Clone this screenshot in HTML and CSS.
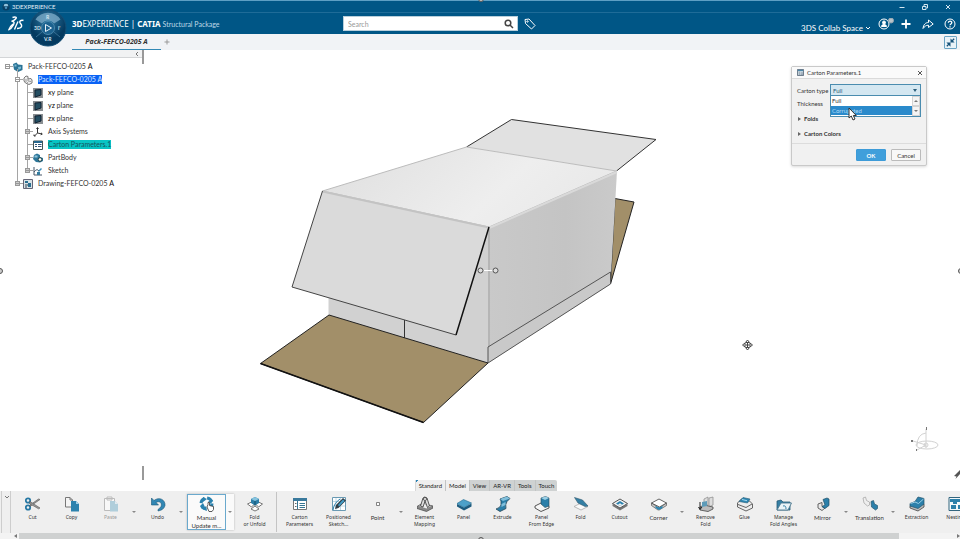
FILE: index.html
```html
<!DOCTYPE html>
<html lang="en">
<head>
    <meta charset="UTF-8">
    <meta name="viewport" content="width=device-width, initial-scale=1.0">
    <title>3DEXPERIENCE</title>
    <link rel="stylesheet" href="styles.css">
</head>
<body>
    <div class="titlebar">
        <svg class="app-icon" viewBox="0 0 10 10"><circle cx="5" cy="5" r="4.5" fill="#0b3f63"/><path d="M2 4a3 3 0 0 1 6 0z" fill="#8fc1dc"/><circle cx="5" cy="6" r="1.5" fill="#4b93bd"/></svg>
        <span class="app-name">3DEXPERIENCE</span>
        <div class="window-buttons">
            <button aria-label="Minimize"><svg viewBox="0 0 8 8"><path d="M1.500 4.500h5" /></svg></button>
            <button aria-label="Restore"><svg viewBox="0 0 8 8"><path d="M1.500 3.500h3.500v3h-3.500zM3 3V1.500h3.500V5H5.500"/></svg></button>
            <button aria-label="Close"><svg viewBox="0 0 8 8"><path d="M2 2l4 4M6 2l-4 4"/></svg></button>
        </div>
    </div>

    <header class="topbar">
        <div class="brand">
            <svg class="ds-logo" viewBox="0 0 17 16"><path d="M4.500 1.500C7 .5 9 1 8 2.500C7 4 4.500 5 3.500 5.300C6 5 7 6.500 5 9.500C4 11.500 2.500 13 1 13.500C1.500 12 3 9.500 5 8M10 5.500C9 7.500 7.500 11 6.500 13.500M15.500 4.500C13 3.500 10.500 5.500 12.500 7.500C14.500 9.500 14 12.500 9 12.500"/></svg>
            <svg class="compass" viewBox="0 0 38 38">
                <defs><radialGradient id="ball" cx="50%" cy="30%"><stop offset="0" stop-color="#2f7ba5"/><stop offset="1" stop-color="#043a60"/></radialGradient></defs>
                <circle cx="19" cy="19" r="18" fill="url(#ball)" stroke="#154f76"/>
                <path d="M6.500 10.500A15 15 0 0 1 31.500 10.500L25 14.500A7.500 7.500 0 0 0 13 14.500z" fill="#7aa9c5" opacity=".8"/>
                <path d="M7 28l6-5M31 28l-6-5" stroke="#376f93"/>
                <circle cx="19" cy="19" r="6.500" fill="#1c628f" stroke="#4988ad"/>
                <path d="M16.500 15.500l6 3.500l-6 3.500z" fill="none" stroke="#e8f3fa"/>
                <text x="17" y="10">R</text><text x="5" y="21">3D</text><text x="29" y="21">i'</text><text x="15" y="32">V.R</text>
            </svg>
            <h1><b>3D</b>EXPERIENCE | <b>CATIA</b></h1>
            <span class="app-title">Structural Package</span>
        </div>

        <form class="search">
            <input type="text" placeholder="Search" aria-label="Search">
            <button type="button" aria-label="Run search"><svg viewBox="0 0 10 10"><circle cx="4" cy="4" r="2.800"/><path d="M6 6l3 3"/></svg></button>
        </form>
        <button class="tag" aria-label="Tags"><svg viewBox="0 0 12 12"><path d="M1 1.500L5 1l6 6.500L7.500 11L1.500 5.500z"/><circle cx="3.500" cy="3.500" r=".7"/></svg></button>

        <div class="account">
            <button class="space">3DS Collab Space <svg viewBox="0 0 6 6"><path d="M1 2l2 2l2-2"/></svg></button>
            <button class="round" aria-label="Profile"><svg class="wide" viewBox="0 0 16 12"><circle cx="6" cy="6" r="5"/><circle cx="6" cy="4.500" r="1.500" fill="#fff"/><path d="M3.500 8.500q0-2 2.500-2t2.500 2z" fill="#fff"/><circle cx="13" cy="2.500" r="2.500" fill="#b9c3ca" stroke="#94a6b1"/></svg></button>
            <button class="round" aria-label="Add"><svg viewBox="0 0 12 12"><path d="M6 1.500v9M1.500 6h9" stroke-width="1.800"/></svg></button>
            <button class="round" aria-label="Share"><svg viewBox="0 0 12 12"><path d="M1 10.500C1.500 6.500 3.500 4.500 6.500 4.500V2L11.200 6L6.500 9.500V7.200C4 7.200 2.500 8.500 1 10.500z"/></svg></button>
            <button class="round" aria-label="Help"><svg viewBox="0 0 12 12"><circle cx="6" cy="6" r="5"/><path d="M4.300 4.800C4.300 2.500 7.800 2.500 7.800 4.600C7.800 6 6 5.900 6 7.300M6 8.300v1.200" stroke-width="1.300"/></svg></button>
        </div>
    </header>

    <nav class="doc-tabs">
        <a class="doc-tab" href="#">Pack-FEFCO-0205 A</a>
        <button class="new-tab" aria-label="New tab"><svg viewBox="0 0 6 6"><path d="M3 .5v5M.5 3h5"/></svg></button>
        <button class="collapse" aria-label="Exit full screen"><svg viewBox="0 0 12 12"><path d="M10 2L7.500 4.500M2 10l2.500-2.500" stroke="#17527a" stroke-width="1.500"/><path d="M6 1.500V6h4.500zM6 10.500V6H1.500z" fill="#17527a"/></svg></button>
    </nav>

    <main class="viewport">
        <svg class="scene" viewBox="0 50 960 441">
            <defs>
                <linearGradient id="lid" x1="0" y1="0" x2="1" y2="0.3"><stop offset="0" stop-color="#dedede"/><stop offset=".7" stop-color="#eeeeee"/><stop offset="1" stop-color="#e9e9e9"/></linearGradient>
                <linearGradient id="side" x1="0" y1="0" x2="1" y2="0"><stop offset="0" stop-color="#c9c9c9"/><stop offset=".6" stop-color="#c4c4c4"/><stop offset="1" stop-color="#cacaca"/></linearGradient>
            </defs>
            <path d="M615 198.500L634 202L610.500 284z" fill="#a28f69" stroke="#222"/>
            <path d="M466.500 147L511.500 119.500L656 139.500L616.500 171z" fill="#e1e1e1"/>
            <path d="M466.500 147L511.500 119.500L656 139.500L616.500 171" fill="none" stroke="#333"/>
            <path d="M328.500 290V315L488 363L489 227z" fill="#d1d1d1"/>
            <path d="M489 227L617 171L610.500 284L488 363z" fill="url(#side)"/>
            <path d="M488 347L610.500 272V284L488 363z" fill="#c9c9c9"/>
            <path d="M466.500 147L616.500 171L489 227L322.500 191z" fill="url(#lid)" stroke="#bcbcbc"/>
            <path d="M489 228L617 172" stroke="#d9d9d9" stroke-width="2"/>
            <path d="M489 229V347" stroke="#b5b5b5" stroke-width="2"/>
            <path d="M488 363V347L610.500 272V284z" fill="none" stroke="#555"/>
            <path d="M404.500 320V338" stroke="#333"/>
            <path d="M329 315L488 363L423.500 422.500L260.500 363.500z" fill="#a28f69" stroke="#222"/>
            <path d="M322.500 191L489 227L456 335L292 287z" fill="#dadada"/>
            <path d="M322.500 191.500L489 227.500" stroke="#c3c3c3" stroke-width="2"/>
            <path d="M322.500 191L292 287L456 335" fill="none" stroke="#444"/>
            <path d="M456 335L489 227M260.500 363.500L423.500 422.500" stroke="#111" stroke-width="1.500"/>
            <path d="M484 270.500h9" stroke="#fff"/>
            <g fill="#ddd" stroke="#555"><circle cx="480.500" cy="270.500" r="2.500"/><circle cx="495.500" cy="270.500" r="2.500"/></g>
            <!-- move cursor -->
            <g fill="#fff" stroke="#444"><path d="M747.500 340l2 2.500h-4zM747.500 350l2-2.500h-4zM742.500 345l2.500-2v4zM752.500 345l-2.500-2v4z"/><path d="M745.500 345h4M747.500 343v4"/></g>
            <!-- orientation gizmo -->
            <g fill="none" stroke="#d2d2d2"><ellipse cx="927" cy="445" rx="11" ry="4"/><path d="M926 429v19M913 441l13 4l-9 5M917 446q0-12 9-13"/><circle cx="926" cy="445" r="2"/></g>
            <g fill="#777"><path d="M926 427h1v3h-1zM911 440h2v2h-2zM916 449h1v2h-1z"/></g>
            <path d="M960 470l-6 6l2.500 .5l-1 2.500l4.500-5z" fill="#555"/>
        </svg>

        <aside class="panel">
            <div class="panel-head"><button aria-label="Hide tree"><svg viewBox="0 0 6 6"><path d="M4 1L2 3l2 2"/></svg></button></div>
            <ul class="tree">
                <li>
                    <div class="row"><i class="toggle"></i><svg class="ico" viewBox="0 0 10 10"><path d="M0 2l3.500-1.500l1.500 2l4.500 .5v5l-4.500 2l-4-2.500z" fill="#2a7396"/><path d="M1.500 2.500h2v2h-2zM5 5l3-.5v2L5.500 8z" fill="#7dbbd4"/></svg><span>Pack-FEFCO-0205 <b>A</b></span></div>
                    <ul>
                        <li>
                            <div class="row"><i class="toggle"></i><svg class="ico" viewBox="0 0 10 10"><path d="M1 3l2-2l2 .5v2.500l3-.5l1 1.500v3l-3 1.500l-3.500-1.500L1 6z" fill="#eee" stroke="#777"/><path d="M5 4v2l3 .5M3 4v3" stroke="#999" fill="none"/></svg><span class="active">Pack-FEFCO-0205 A</span></div>
                            <ul>
                                <li><div class="row leaf"><i class="toggle"></i><svg class="ico" viewBox="0 0 10 10"><path d="M0 0h10v10H0z" fill="#8a8f92"/><path d="M2 2l6-.5V7L2 9z" fill="#244e62" stroke="#123"/></svg><span><b>xy</b> plane</span></div></li>
                                <li><div class="row leaf"><i class="toggle"></i><svg class="ico" viewBox="0 0 10 10"><path d="M0 0h10v10H0z" fill="#8a8f92"/><path d="M2 2l6-.5V7L2 9z" fill="#244e62" stroke="#123"/></svg><span><b>yz</b> plane</span></div></li>
                                <li><div class="row leaf"><i class="toggle"></i><svg class="ico" viewBox="0 0 10 10"><path d="M0 0h10v10H0z" fill="#8a8f92"/><path d="M2 2l6-.5V7L2 9z" fill="#244e62" stroke="#123"/></svg><span><b>zx</b> plane</span></div></li>
                                <li><div class="row"><i class="toggle plus"></i><svg class="ico" viewBox="0 0 10 10"><path d="M4.500 1v5L9 7M4.500 6L1.500 9M3.500 2l1-1.500l1 1.500M1 7.500V9h1.500M8 5.800l1.300 1.200l-1.600.8" fill="none" stroke="#333"/></svg><span>Axis Systems</span></div></li>
                                <li><div class="row leaf"><i class="toggle"></i><svg class="ico" viewBox="0 0 10 10"><path d="M.5 1h9v8.500h-9z" fill="#fff" stroke="#455"/><path d="M1 1h8v2H1z" fill="#27688e"/><path d="M2 4.500h2M2 6.500h2M5 4.500h3.500M5 6.500h3.500" stroke="#357"/></svg><span class="marked">Carton Parameters.1</span></div></li>
                                <li><div class="row"><i class="toggle plus"></i><svg class="ico" viewBox="0 0 10 10"><path d="M1 2l3-1.500l3 1.500v2l3 1v3l-3 1.500L3 9L0 6z" fill="#2d7699"/><path d="M1.500 2.500h3v2h-3z" fill="#91c5da"/><circle cx="7" cy="6.500" r="1.800" fill="#fff" stroke="#244"/></svg><span>PartBody</span></div></li>
                                <li><div class="row"><i class="toggle plus"></i><svg class="ico" viewBox="0 0 10 10"><path d="M1 1v8h8M1 6q3-4 5-1" fill="none" stroke="#456"/><path d="M5 5l3-3l1 1l-3 3z" fill="#3a8fbc"/><path d="M4 6h3v3H4z" fill="#357c9f"/></svg><span>Sketch</span></div></li>
                            </ul>
                        </li>
                        <li><div class="row"><i class="toggle plus"></i><svg class="ico" viewBox="0 0 10 10"><path d="M.5 .5h9v9h-9z" fill="#d9e2e6" stroke="#667"/><path d="M2 2h3v2H2zM5 4h3v4H5z" fill="#2b6f91"/><path d="M2 6h3M2 8h2" stroke="#345"/></svg><span>Drawing-FEFCO-0205 <b>A</b></span></div></li>
                    </ul>
                </li>
            </ul>
        </aside>

        <section class="dialog">
            <div class="dialog-head">
                <svg viewBox="0 0 8 8"><path d="M.5 .5h7v7h-7z" fill="#dce6ec" stroke="#567"/><path d="M1 1h6v1.500H1z" fill="#4c86a8"/><path d="M2.500 3v4M4 4.500h3M4 6h3" stroke="#789"/></svg>
                <h2>Carton Parameters.1</h2>
                <button class="close" aria-label="Close dialog"><svg viewBox="0 0 6 6"><path d="M1 1l4 4M5 1L1 5"/></svg></button>
            </div>
            <div class="dialog-body">
                <div class="field">
                    <label for="cartonType">Carton type</label>
                    <div class="select-wrap">
                        <select id="cartonType"><option>Full</option><option>Corrugated</option></select>
                        <div class="options">
                            <div class="option-list"><div>Full</div><div class="hover">Corrugated</div></div>
                            <div class="option-scroll"><i class="up"></i><i class="down"></i></div>
                        </div>
                        <svg class="pointer" viewBox="0 0 9 14"><path d="M1 1v10l2.300-2l1.700 4l2-1l-1.700-3.500h3z" fill="#fff" stroke="#333"/></svg>
                    </div>
                </div>
                <div class="field"><span class="label">Thickness</span></div>
                <button class="fold">Folds</button>
                <button class="fold">Carton Colors</button>
            </div>
            <div class="dialog-foot">
                <button class="ok">OK</button>
                <button class="cancel">Cancel</button>
            </div>
        </section>

        <nav class="section-tabs">
            <a class="on first" href="#">Standard</a>
            <a class="on" href="#">Model</a>
            <a href="#">View</a>
            <a href="#">AR-VR</a>
            <a href="#">Tools</a>
            <a href="#">Touch</a>
        </nav>
    </main>

    <footer class="actionbar">
        <button class="bar-toggle" aria-label="Collapse bar"><svg viewBox="0 0 6 6"><path d="M1 2l2 2l2-2"/></svg></button>
        <div class="tools">
            <button class="tool"><svg viewBox="0 0 16 16"><circle cx="3" cy="4.500" r="2.200" fill="none" stroke="#2678a4" stroke-width="1.800"/><circle cx="3" cy="11.500" r="2.200" fill="none" stroke="#2678a4" stroke-width="1.800"/><path d="M5 5.500L15 12l-1.500.8L4.500 7.500zM5 10.500L15 3.500l-1.500-.5L5 9z" fill="#999" stroke="#555" stroke-width=".6"/></svg>Cut</button>
            <button class="tool"><svg viewBox="0 0 16 16"><path d="M1.500 1.500h4.500l2.500 2.500v7h-7z" fill="#f4f4f4" stroke="#777"/><path d="M6 1.500V4h2.500" fill="none" stroke="#777"/><path d="M7 5h5l3 3v7.500H7z" fill="#2c82ae"/><path d="M12 5v3h3z" fill="#a4d1e8"/></svg>Copy</button>
            <button class="tool off"><svg viewBox="0 0 16 16"><path d="M1.500 2.500h10v12h-10zM4 1h5v3H4z" fill="#fff" stroke="#999"/><path d="M7 5h5l3 3v7.500H7z" fill="#87b9cf"/><path d="M12 5v3h3z" fill="#d8e8ef"/></svg>Paste</button>
            <button class="more" aria-label="Paste options"></button>
            <button class="tool"><svg viewBox="0 0 16 16"><path d="M1.500 2v7h7L6 6.500C9.500 4.500 12.500 7 11 10.500Q10.300 12 8 13.500v1.500Q14 14 15 9.500C15.500 3.500 9 .5 4 4.500z" fill="#3187b4" stroke="#195778" stroke-width=".6"/></svg>Undo</button>
            <button class="more" aria-label="Undo options"></button>
            <div class="split">
                <button class="tool big"><svg viewBox="0 0 16 16"><circle cx="7.500" cy="7.500" r="5.500" fill="none" stroke="#2b82ae" stroke-width="3" stroke-dasharray="6 2.640"/><path d="M4 1l4 2l-4 3zM14 4l-2 4l-3-3zM1 10l3-3l2 4zM7 10l-3 3l4 2z" fill="#2b82ae"/><path d="M9 8.500v-2h1.500v3l4 1v3l-1.500 2h-3L8 11z" fill="#fff" stroke="#333" stroke-width=".8"/></svg>Manual<br>Update m...</button>
                <button class="more" aria-label="Update options"></button>
            </div>
            <button class="tool"><svg viewBox="0 0 16 16"><path d="M.5 8l4-2l3 2l-3 3zM15.500 8l-4-2l-3 2l3 3zM4 13l4-3l4 3l-4 2z" fill="#fff" stroke="#555" stroke-width=".8"/><path d="M4 3l4-2l4 2v4L8 9.500L4 7z" fill="#2b7ea8"/><path d="M4 3l4-2l4 2l-4 2z" fill="#88c4de"/><path d="M8 5v4.500" stroke="#174d69"/></svg>Fold<br>or Unfold</button>
            <hr>
            <button class="tool"><svg viewBox="0 0 16 16"><path d="M1.500 2.500h13v11h-13z" fill="#fff" stroke="#777"/><path d="M1 2h14v3H1z" fill="#39799c"/><path d="M5.500 5v8M7.500 7.500h5.500M7.500 9.500h5.500M7.500 11.500h5.500" stroke="#357592"/><path d="M3 7.500h1.500M3 10.500h1.500" stroke="#666"/></svg>Carton<br>Parameters</button>
            <button class="tool"><svg viewBox="0 0 16 16"><path d="M1.500 1.500h13v13h-13z" fill="#fff" stroke="#6a9ab3"/><path d="M5 2v12M9.500 2v12M2 5.500h12M2 10h12" stroke="#a8cbdc" stroke-width=".7"/><path d="M2 14Q3 7 9 3" fill="none" stroke="#2b7ea8"/><path d="M4 13l1-4l7-7l3 2.500l-7.500 7.500z" fill="#303e47"/><path d="M7 9l5-5.500l1.500 1.500L8 10.500z" fill="#439dc7"/></svg>Positioned<br>Sketch...</button>
            <button class="tool big"><svg viewBox="0 0 16 16"><path d="M6.500 6.500h3v3h-3z" fill="#fff" stroke="#666" stroke-width=".8"/></svg>Point</button>
            <button class="more" aria-label="Point options"></button>
            <button class="tool"><svg viewBox="0 0 16 16"><path d="M0 10.500l5-3l11 2.500v2L9.500 15.500L0 12.500z" fill="#888" stroke="#444" stroke-width=".7"/><path d="M2 10l4-2.500l8 2.500l-4.500 2.500z" fill="#eee"/><path d="M3.500 10L6 2q1.500-2 4 0l2.500 8l-2 1.500L8 5l-2 6z" fill="#ddd" stroke="#333" stroke-width=".8"/><circle cx="8" cy="3" r="1.500" fill="#fff" stroke="#333" stroke-width=".8"/></svg>Element<br>Mapping</button>
            <button class="tool"><svg viewBox="0 0 16 16"><path d="M1 8v2.500l7 4l7.500-4V7.500l-7.500 4z" fill="#1d5c7f"/><path d="M1 7.500l6.500-4l8 3.500l-7.500 4.500z" fill="#4da1c9" stroke="#236b90" stroke-width=".6"/></svg>Panel</button>
            <button class="tool"><svg viewBox="0 0 16 16"><path d="M5 3l7-2.500l3 2l-3 3q-2 3-1 7L5 15.500l-4-2.500q4-1 5-4V5z" fill="#2b7fa9" stroke="#244859" stroke-width=".8"/><path d="M5 3l7-2.500l3 2L8 5zM6.500 8l4-2v3l-4 2z" fill="#81bfdb"/></svg>Extrude</button>
            <button class="tool"><svg viewBox="0 0 16 16"><path d="M1 10l6-3l8 3v2l-8 3.500L1 12z" fill="#f6f6f6" stroke="#444" stroke-width=".9"/><path d="M7 2l4.500-1.500L15 2v8l-4 1.500L7 8z" fill="#2b7fa9" stroke="#244859" stroke-width=".6"/><path d="M7 2l4.500-1.500L15 2l-4 2z" fill="#9bcfe5"/></svg>Panel<br>From Edge</button>
            <button class="tool"><svg viewBox="0 0 16 16"><path d="M1 10.500l6-3l8 3l-7 3.500z" fill="#fafafa" stroke="#aaa" stroke-width=".8"/><path d="M1.500 1.500l8 2.500l5.500 6l-3 .5L5 7z" fill="#347fa4" stroke="#30596e" stroke-width=".6"/></svg>Fold</button>
            <button class="tool"><svg viewBox="0 0 16 16"><path d="M.5 8v2l7.500 4.500l7.500-4.500V8L8 12z" fill="#777"/><path d="M.5 7.500L8 3l7.500 4.500L8 12z" fill="#f2f2f2" stroke="#444" stroke-width=".9"/><path d="M4 7.500L8 5l4 2.500L8 10z" fill="#2c82ae"/><path d="M6 8.500l2-1.200l2 1.200L8 10z" fill="#eee"/></svg>Cutout</button>
            <button class="tool big"><svg viewBox="0 0 16 16"><path d="M.5 7v2.500L7 14l1.500-.2l7-4.300V7L8 12z" fill="#ccc" stroke="#555" stroke-width=".7"/><path d="M.5 7L8 3l7.500 4L8.500 11z" fill="#fff" stroke="#555" stroke-width=".9"/><path d="M4.500 10l3.500 1.500l3.500-1.500v2L8 14l-3.500-2z" fill="#2d87b3"/></svg>Corner</button>
            <button class="more" aria-label="Corner options"></button>
            <button class="tool"><svg viewBox="0 0 16 16"><path d="M6 3l4-2v8l-4 1zM11 2l4-1v8l-4 2z" fill="#ddd" stroke="#888" stroke-width=".7"/><path d="M2 11l4-2l9 2v2l-5 2.500L2 14z" fill="#bbb" stroke="#444" stroke-width=".8"/><path d="M4 6l5-1v5l-5 1z" fill="#5d9bb8"/><path d="M2 6v7M.5 11L2 13.500L4 11" fill="none" stroke="#222"/></svg>Remove<br>Fold</button>
            <button class="tool"><svg viewBox="0 0 16 16"><path d="M.5 7l4-4l8 2l3 3v4L9 15L.5 11z" fill="#ededed" stroke="#555" stroke-width=".9"/><path d="M2 5.500L6 1.500l7 1.500l-2.500 4z" fill="#2d87b3" stroke="#285b74" stroke-width=".6"/><path d="M1 8.500l8 3l6-3.500" fill="none" stroke="#666"/><path d="M5 3.500l5 1.200" stroke="#a8d8ed"/></svg>Glue</button>
            <button class="tool"><svg viewBox="0 0 16 16"><path d="M1 14V5l4-1l2 2h7v8z" fill="#347fa4" stroke="#275c77" stroke-width=".8"/><path d="M1 14l4-7h10.500L12 14z" fill="#eaf3f7" stroke="#4c7990" stroke-width=".9"/><path d="M7 10q3-1 3 3" fill="none" stroke="#347fa4"/></svg>Manage<br>Fold Angles</button>
            <button class="tool big"><svg viewBox="0 0 16 16"><path d="M3 8l4-1.500v4l3 1.500l-3 2.500L3 12z" fill="#e8e8e8" stroke="#555" stroke-width=".9"/><path d="M8 3.500L12 2l2 1v6.500l-4 3l-3-2l3-1.500z" fill="#2c80aa" stroke="#204d64" stroke-width=".7"/></svg>Mirror</button>
            <button class="more" aria-label="Mirror options"></button>
            <button class="tool big"><svg viewBox="0 0 16 16"><path d="M1 2l2.500-1l1 3.500L7.500 6v3L5.500 10L2 7z" fill="#eee" stroke="#aaa" stroke-width=".8"/><path d="M9 5.500l2.500-1l1 3.500l3 1.500v3l-2 1.500l-4-3z" fill="#2c80aa" stroke="#295970" stroke-width=".7"/></svg>Translation</button>
            <button class="more" aria-label="Translation options"></button>
            <button class="tool"><svg viewBox="0 0 16 16"><path d="M1 10l5-3l9 1v3l-6 4l-8-3z" fill="#bbb" stroke="#444" stroke-width=".8"/><path d="M1 7.500l5-2L9 1l6 1.500V8l-6 4.500L1 10z" fill="#2c80aa" stroke="#22536b" stroke-width=".7"/><path d="M1.500 7.500L6 6l3.500 1.500l5-4.500" fill="none" stroke="#9cd0e7"/></svg>Extraction</button>
            <button class="tool"><svg viewBox="0 0 16 16"><path d="M1 1.500h14v13H1z" fill="#f3f8fa" stroke="#33667f"/><path d="M2 3h12v3H9v2H5V6H2zM3 9h5v4H3zM10 9h4v4h-4z" fill="#2c80aa"/></svg>Nesting</button>
        </div>
    </footer>
    <div class="hscroll"><i class="left"></i><div class="thumb"></div><i class="right"></i></div>

    <!-- window resize handles -->
    <i class="grip top"></i><i class="grip bottom"></i><i class="grip west"></i><i class="grip east"></i>
</body>
</html>
```
FILE: styles.css
```css
* {
    box-sizing: border-box;
}

body {
    margin: 0;
    height: 100vh;
    display: flex;
    flex-direction: column;
    overflow: hidden;
    position: relative;
    font-family: Lato, "Noto Sans", sans-serif;
    font-size: 6px;
    color: #333;
    background: #fff;
}

button {
    padding: 0;
    border: none;
    background: none;
    font: inherit;
    color: inherit;
    cursor: pointer;
}

a {
    color: inherit;
    text-decoration: none;
}

svg {
    display: block;
    flex: none;
}

ul {
    margin: 0;
    padding: 0;
    list-style: none;
}

/* title bar */
.titlebar {
    display: flex;
    align-items: center;
    height: 13px;
    flex: none;
    padding: 0 8px 0 2px;
    background: #005686;
    border-top: 1px solid #5d9fc4;
    border-bottom: 1px solid #1f6c98;
    color: #e4eff6;
}

.app-icon {
    width: 8px;
    height: 8px;
}

.app-name {
    margin-left: 2px;
}

.window-buttons {
    display: flex;
    gap: 15px;
    margin-left: auto;
}

.window-buttons svg {
    width: 8px;
    height: 8px;
    fill: none;
    stroke: #d5e6f0;
}

/* header */
.topbar {
    display: flex;
    align-items: center;
    height: 21px;
    flex: none;
    background: #005686;
    color: #fff;
}

.brand {
    display: flex;
    align-items: center;
    flex: 0 0 343px;
}

.ds-logo {
    width: 17px;
    height: 16px;
    margin-left: 8px;
    fill: none;
    stroke: #fff;
    stroke-width: 1.4;
}

.compass {
    position: relative;
    z-index: 2;
    width: 38px;
    height: 38px;
    margin: -4px 5px -12px 4px;
}

.compass text {
    font-size: 5px;
    font-weight: bold;
    fill: #d4e6f0;
}

.brand h1 {
    margin: 0;
    font-family: "Noto Sans", sans-serif;
    font-size: 8px;
    font-weight: normal;
}

.app-title {
    margin-left: 2px;
    font-size: 7px;
    color: #bfd8e6;
}

.search {
    display: flex;
    align-items: center;
    flex: 0 1 175px;
    height: 15px;
    background: #fff;
    border: 1px solid #b9cfdb;
}

.search input {
    flex: 1;
    min-width: 0;
    padding: 0 4px;
    border: none;
    outline: none;
    background: none;
    font: inherit;
    font-size: 7px;
}

.search input::placeholder {
    color: #999;
}

.search svg {
    width: 10px;
    height: 10px;
    margin-right: 3px;
    fill: none;
    stroke: #444;
    stroke-width: 1.5;
}

.tag svg {
    width: 12px;
    height: 12px;
    margin-left: 6px;
    fill: none;
    stroke: #fff;
}

.account {
    display: flex;
    align-items: center;
    gap: 10px;
    margin-left: auto;
    padding-right: 4px;
}

.account svg {
    width: 12px;
    height: 12px;
    fill: none;
    stroke: #fff;
}

.account svg.wide {
    width: 16px;
    margin-right: -4px;
}

.account .space {
    display: flex;
    align-items: center;
    gap: 2px;
    margin-right: -3px;
    padding-top: 8px;
    font-size: 8px;
}

.account .space svg {
    width: 6px;
    height: 6px;
}

/* document tabs */
.doc-tabs {
    display: flex;
    align-items: center;
    height: 16px;
    flex: none;
    padding-left: 72px;
    padding-right: 3px;
    background: #f1f3f6;
}

.doc-tab {
    width: 89px;
    height: 15px;
    border-bottom: 1px solid #3288b5;
    font-family: "Noto Sans", sans-serif;
    font-size: 7px;
    font-weight: bold;
    font-style: italic;
    line-height: 14px;
    text-align: center;
}

.new-tab svg {
    width: 6px;
    height: 6px;
    margin-left: 3px;
    stroke: #999;
}

.collapse {
    margin-left: auto;
    border: 1px solid #6aa3c4;
    border-radius: 1px;
    background: #e9f2f8;
}

.collapse svg {
    width: 11px;
    height: 11px;
}

/* 3D view */
.viewport {
    position: relative;
    flex: 1;
    min-height: 0;
}

.scene {
    position: absolute;
    width: 100%;
    height: 100%;
}

.panel {
    position: relative;
    width: 144px;
    height: 100%;
}

.panel::before,
.panel::after {
    content: "";
    position: absolute;
    right: 0;
    width: 2px;
    height: 14px;
    background: #999;
}

.panel::before {
    top: 0;
}

.panel::after {
    bottom: 11px;
}

.panel-head {
    display: flex;
    justify-content: flex-end;
    height: 8px;
    padding-right: 4px;
    background: #f1f2f3;
    border-bottom: 1px solid #d3d5d7;
}

.panel-head svg {
    width: 6px;
    height: 6px;
    fill: none;
    stroke: #777;
}

/* tree */
.tree {
    padding: 2px 0 0 5px;
    font-size: 7px;
}

.tree ul {
    position: relative;
    padding-left: 10px;
}

.tree ul::before {
    content: "";
    position: absolute;
    left: 12px;
    top: -4px;
    bottom: 6px;
    border-left: 1px solid #a5a5a5;
}

.row {
    display: flex;
    align-items: center;
    height: 13px;
}

.toggle {
    position: relative;
    width: 5px;
    height: 5px;
    margin-right: 3px;
    border: 1px solid #999;
    background: linear-gradient(#999, #999) center / 3px 1px no-repeat #fff;
}

.toggle::after {
    content: "";
    position: absolute;
    left: 4px;
    top: 1px;
    width: 3px;
    height: 1px;
    background: #a5a5a5;
}

.toggle.plus {
    background-color: #ccc;
}

.leaf .toggle {
    border-color: transparent;
    background: none;
}

.leaf .toggle::after {
    left: 1px;
    width: 6px;
}

.ico {
    width: 10px;
    height: 10px;
    margin-right: 5px;
}

.row span {
    line-height: 9px;
}

.row b {
    font-weight: 500;
    color: #111;
}

.row .active {
    background: #0a62f5;
    color: #d9e8ff;
}

.row .marked {
    background: #08c4c4;
    color: #14565e;
}

/* dialog */
.dialog {
    position: absolute;
    top: 16px;
    right: 33px;
    width: 136px;
    border: 1px solid #c9c9c9;
    border-radius: 2px;
    background: #f1f1f1;
    box-shadow: 0 1px 3px rgba(0, 0, 0, 0.15);
}

.dialog-head {
    display: flex;
    align-items: center;
    height: 12px;
    padding: 0 3px 0 5px;
    border-bottom: 1px solid #dadada;
    background: #fafafa;
}

.dialog-head svg {
    width: 7px;
    height: 7px;
}

.dialog-head h2 {
    margin: 0 auto 0 3px;
    font-size: 6px;
    font-weight: normal;
}

.dialog-head .close svg {
    width: 6px;
    height: 6px;
    stroke: #555;
}

.dialog-body {
    padding: 5px 5px 2px;
}

.field {
    display: flex;
    align-items: center;
    height: 12px;
}

.field + .field {
    height: 15px;
}

.field label {
    width: 33px;
    white-space: nowrap;
}

.select-wrap {
    position: relative;
    flex: 1;
}

.select-wrap select {
    display: block;
    width: 100%;
    height: 12px;
    padding: 0 2px;
    appearance: none;
    border: 1px solid #4a8caf;
    border-radius: 0;
    background: #d4e7f1;
    color: #2b5d7a;
    font: inherit;
}

.select-wrap::after {
    content: "";
    position: absolute;
    right: 4px;
    top: 5px;
    border: 2px solid transparent;
    border-top: 3px solid #2b5d7a;
    border-bottom: 0;
}

.options {
    position: absolute;
    z-index: 1;
    top: 12px;
    left: 0;
    right: 0;
    display: flex;
    border: 1px solid #4a8caf;
    border-top: none;
    background: #fff;
    line-height: 10px;
}

.option-list {
    flex: 1;
}

.option-list div {
    padding-left: 1px;
}

.option-list .hover {
    height: 9px;
    background: #2a8acb;
    color: #b5dcf5;
}

.option-scroll {
    display: flex;
    flex-direction: column;
    width: 8px;
}

.option-scroll i {
    flex: 1;
    border: 1px solid #d4d4d4;
    background: #f4f4f4;
}

.option-scroll i::before {
    content: "";
    display: block;
    width: 0;
    margin: 3px 1px;
    border: 2px solid transparent;
    border-top: 0;
    border-bottom: 2px solid #777;
}

.option-scroll .down::before {
    border-bottom: 0;
    border-top: 2px solid #777;
}

.pointer {
    position: absolute;
    z-index: 2;
    left: 18px;
    top: 23px;
    width: 9px;
    height: 14px;
}

.fold {
    display: flex;
    align-items: center;
    gap: 3px;
    height: 15px;
    padding-left: 1px;
    font-weight: bold;
    color: #333;
}

.fold::before {
    content: "";
    border: 2px solid transparent;
    border-left: 3px solid #666;
    border-right: 0;
}

.dialog-foot {
    display: flex;
    justify-content: flex-end;
    gap: 5px;
    padding: 5px 5px 4px;
    border-top: 1px solid #dcdcdc;
}

.dialog-foot button {
    width: 30px;
    height: 12px;
    border: 1px solid #bbb;
    border-radius: 1px;
    background: #f8f8f8;
}

.dialog-foot .ok {
    border-color: #3d9bd8;
    background: #409fdb;
    color: #fff;
    font-weight: bold;
}

/* section tabs */
.section-tabs {
    position: absolute;
    left: 0;
    right: 0;
    bottom: 0;
    display: flex;
    justify-content: center;
    padding-left: 12px;
    line-height: 11px;
}

.section-tabs a {
    padding: 0 3px;
    border-right: 1px solid #c2c4c4;
    background: #cfd2d2;
    color: #222;
}

.section-tabs a:last-child {
    border-right: none;
    border-radius: 0 2px 0 0;
}

.section-tabs .on {
    background: #efefef;
}

.section-tabs .first {
    background: linear-gradient(135deg, #2a83b5 2px, #efefef 2px);
    border-left: 1px solid #d8d8d8;
}

/* action bar */
.actionbar {
    display: flex;
    height: 42px;
    flex: none;
    overflow: hidden;
    background: #efefef;
}

.bar-toggle {
    width: 10px;
    flex: none;
    margin-left: 1px;
    padding: 3px 2px;
    display: flex;
    border: 1px solid #cdcdcd;
    border-width: 0 1px;
}

.bar-toggle svg {
    width: 6px;
    height: 6px;
    fill: none;
    stroke: #777;
}

.tools {
    display: flex;
    padding-left: 2px;
}

.tools hr {
    flex: none;
    width: 1px;
    height: 40px;
    margin: 1px 3px 0 2px;
    border: none;
    background: #c4c4c4;
}

.tool {
    display: flex;
    flex-direction: column;
    align-items: center;
    flex: none;
    width: 39px;
    height: 42px;
    padding-top: 5px;
    font-family: "Noto Sans", sans-serif;
    font-size: 5px;
    line-height: 7px;
    text-align: center;
    white-space: nowrap;
    color: #333;
}

.tool svg {
    width: 16px;
    height: 16px;
    margin-bottom: 2px;
}

.tool.big {
    font-family: Lato, sans-serif;
    font-size: 6px;
    line-height: 8px;
}

.tool.off {
    color: #999;
}

.tool.off svg {
    opacity: 0.6;
}

.more {
    flex: none;
    width: 8px;
    height: 42px;
}

.more::before {
    content: "";
    display: block;
    width: 0;
    margin: 0 auto;
    border: 2px solid transparent;
    border-top: 2px solid #888;
    border-bottom: 0;
}

.split {
    display: flex;
    height: 36px;
    margin: 3px 1px 0 2px;
    background: #fafafa;
    box-shadow: 0 0 2px rgba(0, 0, 0, 0.25);
}

.split .tool {
    height: 36px;
    padding-top: 1px;
    border: 1px solid #6aa9cd;
}

.split .more {
    height: 36px;
}

/* scrollbar */
.hscroll {
    display: flex;
    align-items: center;
    height: 6px;
    flex: none;
    padding-left: 14px;
    background: #f3f3f3;
}

.hscroll i {
    border: 2px solid transparent;
}

.hscroll .left {
    border-left: 0;
    border-right: 3px solid #777;
}

.hscroll .right {
    margin-left: auto;
    border-right: 0;
    border-left: 3px solid #777;
}

.hscroll .thumb {
    width: 93%;
    height: 6px;
    margin-left: 2px;
    background: #cfd1d1;
}

.grip {
    position: absolute;
    z-index: 3;
    width: 6px;
    height: 6px;
    border: 1px solid #555;
    border-radius: 50%;
    background: #ccc;
}

.grip.top {
    top: -4px;
    left: 50%;
    margin-left: -2px;
}

.grip.bottom {
    bottom: -4px;
    left: 50%;
    margin-left: -2px;
}

.grip.west {
    left: -3px;
    top: 50%;
    margin-top: -2px;
}

.grip.east {
    right: -4px;
    top: 50%;
    margin-top: -2px;
}
```
